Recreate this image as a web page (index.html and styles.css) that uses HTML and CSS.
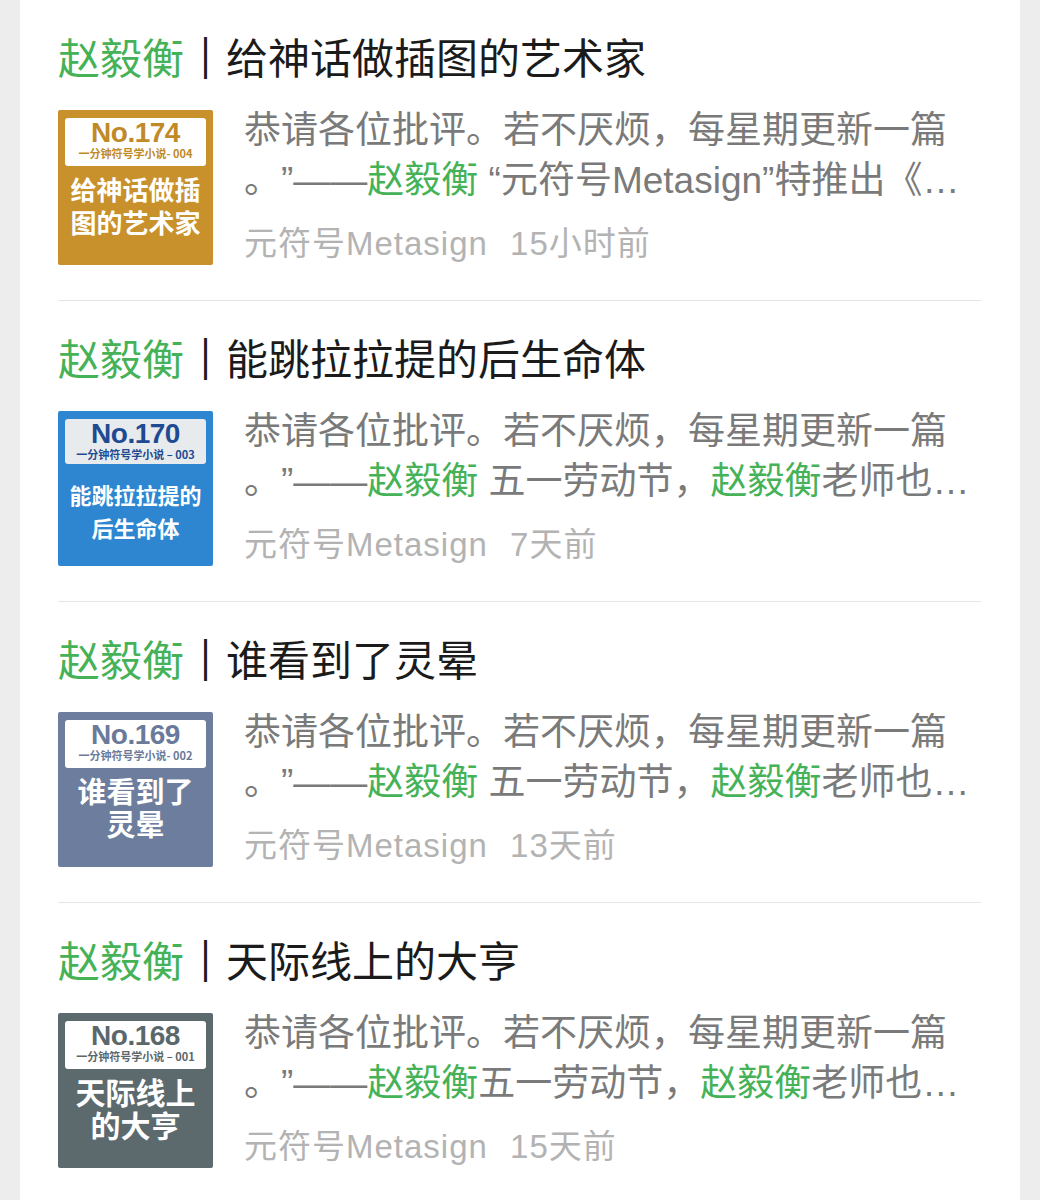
FILE: index.html
```html
<!DOCTYPE html>
<html lang="zh-CN">
<head>
  <meta charset="UTF-8">
  <title>赵毅衡 - 元符号Metasign</title>
  <link rel="stylesheet" href="styles.css">
</head>
<body>
  <ul class="list">
    <li class="item">
      <h2 class="title"><span class="name">赵毅衡</span><span class="bar">｜</span>给神话做插图的艺术家</h2>
      <div class="row">
        <div class="thumb gold">
          <div class="badge">
            <div class="no">No.174</div>
            <div class="series">一分钟符号学小说- 004</div>
          </div>
          <div class="cover">给神话做插<br>图的艺术家</div>
        </div>
        <div class="info">
          <p class="desc">恭请各位批评。若不厌烦，每星期更新一篇<br>。”——<span class="name">赵毅衡</span> “元符号Metasign”特推出《…</p>
          <p class="meta">元符号Metasign <span class="time">15小时前</span></p>
        </div>
      </div>
    </li>
    <li class="item">
      <h2 class="title"><span class="name">赵毅衡</span><span class="bar">｜</span>能跳拉拉提的后生命体</h2>
      <div class="row">
        <div class="thumb blue">
          <div class="badge">
            <div class="no">No.170</div>
            <div class="series">一分钟符号学小说 – 003</div>
          </div>
          <div class="cover">能跳拉拉提的<br>后生命体</div>
        </div>
        <div class="info">
          <p class="desc">恭请各位批评。若不厌烦，每星期更新一篇<br>。”——<span class="name">赵毅衡</span> 五一劳动节，<span class="name">赵毅衡</span>老师也…</p>
          <p class="meta">元符号Metasign <span class="time">7天前</span></p>
        </div>
      </div>
    </li>
    <li class="item">
      <h2 class="title"><span class="name">赵毅衡</span><span class="bar">｜</span>谁看到了灵晕</h2>
      <div class="row">
        <div class="thumb slate">
          <div class="badge">
            <div class="no">No.169</div>
            <div class="series">一分钟符号学小说- 002</div>
          </div>
          <div class="cover">谁看到了<br>灵晕</div>
        </div>
        <div class="info">
          <p class="desc">恭请各位批评。若不厌烦，每星期更新一篇<br>。”——<span class="name">赵毅衡</span> 五一劳动节，<span class="name">赵毅衡</span>老师也…</p>
          <p class="meta">元符号Metasign <span class="time">13天前</span></p>
        </div>
      </div>
    </li>
    <li class="item">
      <h2 class="title"><span class="name">赵毅衡</span><span class="bar">｜</span>天际线上的大亨</h2>
      <div class="row">
        <div class="thumb dark">
          <div class="badge">
            <div class="no">No.168</div>
            <div class="series">一分钟符号学小说 – 001</div>
          </div>
          <div class="cover">天际线上<br>的大亨</div>
        </div>
        <div class="info">
          <p class="desc">恭请各位批评。若不厌烦，每星期更新一篇<br>。”——<span class="name">赵毅衡</span>五一劳动节，<span class="name">赵毅衡</span>老师也…</p>
          <p class="meta">元符号Metasign <span class="time">15天前</span></p>
        </div>
      </div>
    </li>
  </ul>
</body>
</html>
```

FILE: styles.css
```css
body, ul, li, h2, p {
  list-style: none;
  margin: 0;
  padding: 0;
}

body {
  background-color: #ededed;
  font-family: "Liberation Sans", "Noto Sans CJK SC", sans-serif;
  text-spacing-trim: space-all;
}

.list {
  margin: 0 20px;
  min-height: 1200px;
  background-color: #fff;
}
.item {
  margin: 0 39px 0 38px;
  padding: 35px 0 34px;
  border-bottom: 1px solid #e5e5e5;
}
.title {
  font-size: 42px;
  line-height: 50px;
  font-weight: normal;
  color: #1b1b1b;
  white-space: nowrap;
}
.title .bar {
  font-weight: bold;
  text-shadow: 1px 0 0 #1b1b1b;
}
.name {
  color: #45b257;
}

.row {
  display: flex;
  gap: 31px;
  margin-top: 21px;
}
.info {
  flex: 1;
  min-width: 0;
}
.desc {
  font-size: 37px;
  line-height: 50px;
  color: #7a7a7a;
  white-space: nowrap;
  overflow: hidden;
}
.meta {
  margin-top: 15px;
  font-size: 33px;
  line-height: 45px;
  letter-spacing: 1px;
  color: #b3b3b3;
  white-space: nowrap;
}
.meta .time {
  margin-left: 12px;
}

/* cover pictures */
.thumb {
  flex: none;
  width: 155px;
  height: 155px;
  margin-top: 4px;
  border-radius: 2px;
  display: flex;
  flex-direction: column;
}
.badge {
  margin: 8px 7px 0;
  height: 48px;
  border-radius: 3px;
  background-color: #fff;
  text-align: center;
}
.no {
  padding-top: 1px;
  font-size: 28px;
  line-height: 27px;
  font-weight: bold;
  letter-spacing: -0.5px;
}
.series {
  font-family: "Noto Sans CJK SC", sans-serif;
  font-size: 11px;
  line-height: 14px;
  font-weight: bold;
  white-space: nowrap;
}
.cover {
  margin-top: 6px;
  font-family: "Noto Sans CJK SC", sans-serif;
  line-height: 33px;
  font-weight: bold;
  color: #fff;
  text-align: center;
  white-space: nowrap;
}

.gold {
  background-color: #c8912c;
}
.gold .badge {
  color: #c08a27;
}
.gold .cover {
  font-size: 26px;
}

.blue {
  background-color: #2e86d1;
}
.blue .badge {
  height: 45px;
  background-color: #e7ebee;
  color: #1d4a91;
}
.blue .cover {
  margin-top: 14px;
  font-size: 22px;
}

.slate {
  background-color: #6d7d9d;
}
.slate .badge {
  color: #6a7a9a;
}
.slate .cover {
  font-size: 29px;
}

.dark {
  background-color: #5c6a6e;
}
.dark .badge {
  color: #5a686c;
}
.dark .cover {
  font-size: 30px;
}
```
